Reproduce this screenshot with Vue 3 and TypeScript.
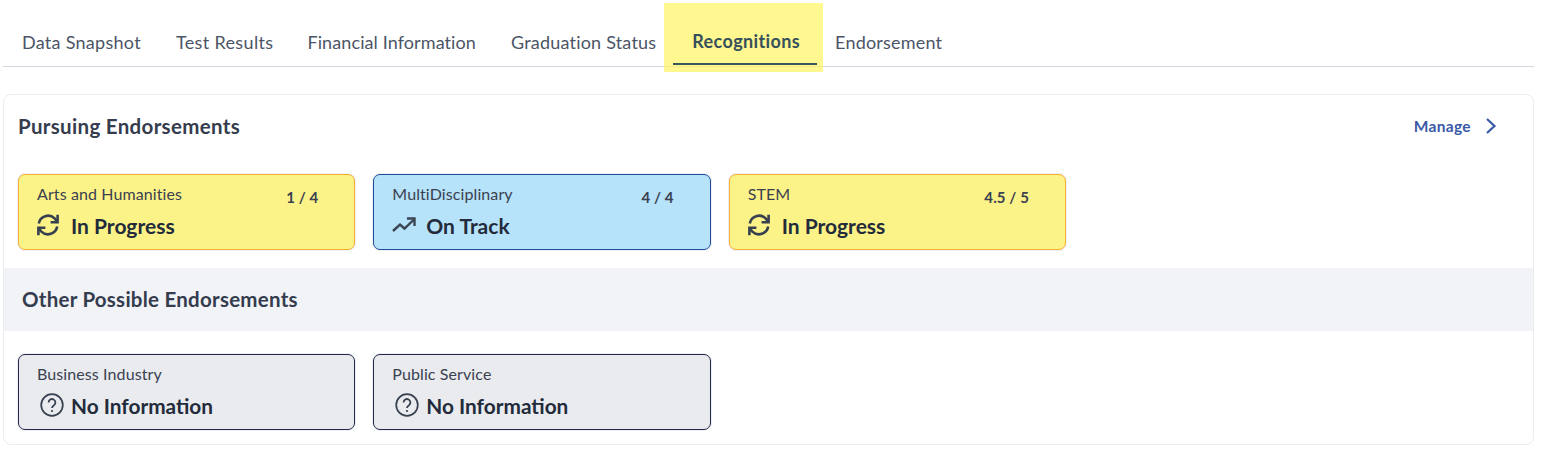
<script setup lang="ts">
interface Tile { name: string; status: string; kind: 'progress' | 'track' | 'none'; score?: string }
const tabs = ['Data Snapshot', 'Test Results', 'Financial Information', 'Graduation Status', 'Recognitions', 'Endorsement']
const pursuing: Tile[] = [
  { name: 'Arts and Humanities', status: 'In Progress', kind: 'progress', score: '1 / 4' },
  { name: 'MultiDisciplinary', status: 'On Track', kind: 'track', score: '4 / 4' },
  { name: 'STEM', status: 'In Progress', kind: 'progress', score: '4.5 / 5' },
]
const other: Tile[] = [
  { name: 'Business Industry', status: 'No Information', kind: 'none' },
  { name: 'Public Service', status: 'No Information', kind: 'none' },
]
</script>

<template>
  <div class="page">
    <nav class="tabs">
      <div v-for="t in tabs" :key="t" class="tab" :class="{ active: t === 'Recognitions' }">
        <span>{{ t }}</span>
      </div>
    </nav>
    <section class="panel">
      <header class="head">
        <h2>Pursuing Endorsements</h2>
        <a class="manage">Manage
          <svg width="12" height="18" viewBox="0 0 12 18"><path d="M2 2l7.5 7L2 16" fill="none" stroke="#3a5aa5" stroke-width="2.2"/></svg>
        </a>
      </header>
      <div class="row first">
        <div v-for="c in pursuing" :key="c.name" class="tile" :class="c.kind">
          <div class="top"><span class="name">{{ c.name }}</span><b v-if="c.score" class="score">{{ c.score }}</b></div>
          <div class="status">
            <svg v-if="c.kind === 'progress'" class="ic" width="22" height="22" viewBox="0 0 22 22" fill="none" stroke="#36404f" stroke-width="2.6">
              <path d="M1.8 9.5A9.4 9.4 0 0 1 17.6 4.4L20 7.2"/>
              <path d="M20.6 .8v7.4h-7"/>
              <path d="M20.2 12.5A9.4 9.4 0 0 1 4.4 17.6L2 14.8"/>
              <path d="M1.4 21.2v-7.4h7"/>
            </svg>
            <svg v-else class="ic" width="24" height="22" viewBox="0 0 24 22" fill="none" stroke="#3b4654" stroke-width="2.4">
              <path d="M1 17l7-6.5 4.5 4L22 5.5"/>
              <path d="M15 4.5h7.5V12"/>
            </svg>
            <span>{{ c.status }}</span>
          </div>
        </div>
      </div>
      <h3 class="band">Other Possible Endorsements</h3>
      <div class="row second">
        <div v-for="c in other" :key="c.name" class="tile" :class="c.kind">
          <div class="top"><span class="name">{{ c.name }}</span></div>
          <div class="status">
            <svg class="ic q" width="24" height="24" viewBox="0 0 24 24" fill="none" stroke="#36404f" stroke-width="1.7">
              <circle cx="12" cy="12" r="10.8"/>
              <path d="M8.6 9.4a3.4 3.4 0 1 1 5.4 2.8c-1.2.8-2 1.4-2 2.9" stroke-width="1.8"/>
              <circle cx="12" cy="18" r="1.1" fill="#36404f" stroke="none"/>
            </svg>
            <span>{{ c.status }}</span>
          </div>
        </div>
      </div>
    </section>
  </div>
</template>

<style>
html, body { margin: 0; background: #fff; }
</style>

<style scoped>
.page {
  width: 1531px;
  height: 461px;
  margin-left: 3px;
  font-family: "Lato", "Open Sans", sans-serif;
  color: #2b3445;
  box-sizing: border-box;
  padding-top: 20px;
}
.tabs {
  display: flex;
  height: 47px;
  padding-left: 19px;
  box-sizing: border-box;
  border-bottom: 1px solid #d2d6df;
  font-size: 18px;
  letter-spacing: 0.2px;
  color: #4b5566;
}
.tab { margin-right: 35px; padding-top: 11px; line-height: 22px; position: relative; white-space: nowrap; }
.tab:nth-child(1) { letter-spacing: 0.28px; }
.tab:nth-child(2) { letter-spacing: 0.35px; margin-right: 34px; }
.tab:nth-child(3) { letter-spacing: 0.1px; }
.tab:nth-child(4) { margin-right: 36px; }
.tab.active {
  font-weight: 700;
  color: #36505c;
  padding-top: 10px;
  letter-spacing: 0.38px;
}
.tab.active::before {
  content: "";
  position: absolute;
  left: -28px;
  right: -23px;
  top: -17px;
  height: 69px;
  background: rgba(255, 243, 90, 0.68);
}
.tab.active::after {
  content: "";
  position: absolute;
  left: -19px;
  right: -17px;
  bottom: 1px;
  height: 2px;
  background: #36565e;
}
.tab.active span { position: relative; }
.panel {
  margin-top: 27px;
  height: 351px;
  box-sizing: border-box;
  border: 1px solid #ebecef;
  border-radius: 8px;
}
.head {
  display: flex;
  justify-content: space-between;
  align-items: center;
  height: 61px;
  padding: 0 36px 0 14px;
}
h2 { margin: 0; font-size: 20.5px; letter-spacing: 0.32px; font-weight: 700; color: #343c4e; }
.manage {
  display: flex;
  align-items: center;
  gap: 14px;
  font-size: 15.5px;
  letter-spacing: 0.35px;
  font-weight: 700;
  color: #3a5aa5;
}
.row { display: flex; gap: 18px; padding-left: 14px; }
.first { margin-top: 18px; }
.second { margin-top: 23px; }
.tile {
  width: 337.33px;
  height: 76px;
  box-sizing: border-box;
  border-radius: 7px;
  border: 1px solid;
  padding: 9px 18px 0;
  box-shadow: 0 0 0 1px rgba(190, 195, 220, 0.25);
}
.tile.progress { background: #fcf388; border-color: #f8ae30; }
.tile.track { background: #b6e2fa; border-color: #1f4d99; }
.tile.none { background: #e9ebef; border-color: #1f2a44; }
.top { display: flex; justify-content: space-between; height: 20px; line-height: 20px; font-size: 16px; letter-spacing: 0.1px; color: #3a4150; padding-right: 18px; }
.score { font-size: 15px; font-weight: 700; position: relative; top: 3px; color: #3a4150; }
.status {
  display: flex;
  align-items: center;
  margin-top: 8px;
  height: 26px;
  font-size: 21px;
  font-weight: 700;
  color: #232b3b;
}
.none .status { font-size: 20.8px; }
.ic { width: 22px; margin-right: 12px; flex: none; }
.track .ic { width: 24px; margin-right: 10px; }
.q { width: 24px; margin-left: 3px; margin-right: 7px; }
.band {
  margin: 18px 0 0;
  height: 63px;
  line-height: 62px;
  padding-left: 18px;
  background: #f2f3f7;
  font-size: 20.5px;
  letter-spacing: 0.25px;
  font-weight: 700;
  color: #343c4e;
}
</style>
